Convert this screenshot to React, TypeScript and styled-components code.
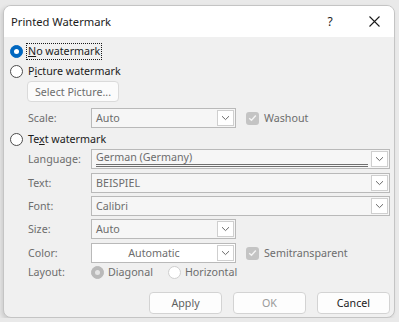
import React from "react";
import styled, { createGlobalStyle } from "styled-components";

const Global = createGlobalStyle`
  html, body { margin: 0; padding: 0; background: #e9e9e9; }
  body { font-family: "Noto Sans", "Open Sans", sans-serif; font-size: 10.7px; color: #1a1a1a; }
  * { box-sizing: border-box; }
`;

const Window = styled.div`
  margin: 5px 0 0 3px;
  width: 392px;
  height: 313px;
  border: 1px solid #c4c4c4;
  border-radius: 8px;
  background: #f0f0f0;
  overflow: hidden;
  box-shadow: -2px 2px 4px rgba(0, 0, 0, 0.12);
  display: flex;
  flex-direction: column;
`;

const TitleBar = styled.div`
  height: 31px;
  background: #ffffff;
  display: flex;
  align-items: center;
  padding-left: 7px;
  flex-shrink: 0;
`;

const Title = styled.div`
  flex: 1;
  font-size: 11.2px;
  color: #1b1b1b;
`;

const TitleButton = styled.div<{ $w: number }>`
  width: ${(p) => p.$w}px;
  height: 31px;
  display: flex;
  align-items: center;
  justify-content: center;
  font-size: 12px;
  color: #1b1b1b;
`;

const Body = styled.div`
  padding: 5px 4px 0 6px;
  display: flex;
  flex-direction: column;
  align-items: stretch;
`;

const RadioRow = styled.div<{ $mt?: number }>`
  height: 18px;
  margin-top: ${(p) => p.$mt ?? 0}px;
  display: flex;
  align-items: center;
  gap: 4px;
`;

const RadioCircle = styled.span<{ $state: "on" | "off" | "dis" | "disoff" }>`
  width: 13px;
  height: 13px;
  border-radius: 50%;
  flex-shrink: 0;
  position: relative;
  background: ${(p) =>
    p.$state === "on" ? "#0067c0" : p.$state === "dis" ? "#b9b9b9" : "#ffffff"};
  border: 1px solid
    ${(p) =>
      p.$state === "on" ? "#0067c0" : p.$state === "dis" ? "#b9b9b9" : p.$state === "disoff" ? "#cfcfcf" : "#4c4c4c"};
  &::after {
    content: "";
    display: ${(p) => (p.$state === "on" || p.$state === "dis" ? "block" : "none")};
    position: absolute;
    left: 50%;
    top: 50%;
    width: 5px;
    height: 5px;
    margin: -2.5px 0 0 -2.5px;
    border-radius: 50%;
    background: ${(p) => (p.$state === "dis" ? "#e4e4e4" : "#ffffff")};
  }
`;

const RadioText = styled.span<{ $focus?: boolean }>`
  color: #1a1a1a;
  padding: 0 1px;
  line-height: 15px;
  outline: ${(p) => (p.$focus ? "1px dotted #1a1a1a" : "none")};
`;

const U = styled.span`
  text-decoration: underline;
`;

const SelectButton = styled.div`
  margin: 1px 0 0 17px;
  width: 92px;
  height: 21px;
  background: #fbfbfb;
  border: 1px solid #dadada;
  border-radius: 4px;
  color: #6d6d6d;
  display: flex;
  align-items: center;
  justify-content: center;
`;

const FormRow = styled.div<{ $mt?: number; $h?: number }>`
  margin-top: ${(p) => p.$mt ?? 0}px;
  height: ${(p) => p.$h ?? 20}px;
  display: grid;
  grid-template-columns: 81px auto auto 1fr;
  align-items: center;
`;

const WideRow = styled(FormRow)`
  grid-template-columns: 81px 1fr;
`;

const Label = styled.div`
  padding-left: 18px;
  color: #6d6d6d;
`;

const Combo = styled.div<{ $w?: number; $white?: boolean }>`
  width: ${(p) => (p.$w ? `${p.$w}px` : "auto")};
  height: 20px;
  border: 1px solid #b9b9b9;
  background: ${(p) => (p.$white ? "#ffffff" : "#f6f6f6")};
  display: flex;
  align-items: stretch;
`;

const ComboText = styled.div<{ $center?: boolean }>`
  flex: 1;
  display: flex;
  align-items: center;
  justify-content: ${(p) => (p.$center ? "center" : "flex-start")};
  padding-left: ${(p) => (p.$center ? 0 : 4)}px;
  color: #6d6d6d;
  white-space: nowrap;
  overflow: hidden;
`;

const DoubleLine = styled.div`
  flex: 1;
  display: flex;
  flex-direction: column;
  padding-left: 4px;
  padding-right: 2px;
`;

const DoubleText = styled.div`
  color: #6d6d6d;
  line-height: 13px;
  border-bottom: 3px double #6f6f6f;
  margin-top: 1px;
`;

const DropButton = styled.div`
  width: 17px;
  margin: 1px;
  background: #ffffff;
  border: 1px solid #cfcfcf;
  display: flex;
  align-items: center;
  justify-content: center;
`;

const CheckWrap = styled.div`
  display: flex;
  align-items: center;
  gap: 5px;
  margin-left: 10px;
  color: #6d6d6d;
`;

const CheckBox = styled.span`
  width: 13px;
  height: 13px;
  border-radius: 3px;
  background: #c4c4c4;
  display: flex;
  align-items: center;
  justify-content: center;
`;

const LayoutOptions = styled.div`
  display: flex;
  align-items: center;
  gap: 4px;
  color: #6d6d6d;
`;

const Spacer = styled.span`
  width: 7px;
`;

const ButtonBar = styled.div`
  margin-top: 12px;
  display: flex;
  justify-content: flex-end;
  gap: 11px;
`;

const DialogButton = styled.div<{ $color: string }>`
  width: 73px;
  height: 22px;
  background: #fdfdfd;
  border: 1px solid #d3d3d3;
  border-radius: 4px;
  display: flex;
  align-items: center;
  justify-content: center;
  color: ${(p) => p.$color};
`;

const Chevron = () => (
  <svg width="9" height="6" viewBox="0 0 9 6">
    <path d="M1 1.2 L4.5 4.6 L8 1.2" fill="none" stroke="#6a6a6a" strokeWidth="1" />
  </svg>
);

const Check = () => (
  <svg width="9" height="8" viewBox="0 0 9 8">
    <path d="M1.2 4.2 L3.5 6.3 L7.8 1.5" fill="none" stroke="#f4f4f4" strokeWidth="1.4" />
  </svg>
);

const CloseIcon = () => (
  <svg width="11" height="11" viewBox="0 0 11 11">
    <path d="M0.5 0.5 L10.5 10.5 M10.5 0.5 L0.5 10.5" stroke="#1b1b1b" strokeWidth="1.1" />
  </svg>
);

const Drop = () => (
  <DropButton>
    <Chevron />
  </DropButton>
);

export default function App() {
  return (
    <>
      <Global />
      <Window>
        <TitleBar>
          <Title>Printed Watermark</Title>
          <TitleButton $w={48}>?</TitleButton>
          <TitleButton $w={40}>
            <CloseIcon />
          </TitleButton>
        </TitleBar>
        <Body>
          <RadioRow>
            <RadioCircle $state="on" />
            <RadioText $focus>
              <U>N</U>o watermark
            </RadioText>
          </RadioRow>
          <RadioRow $mt={2}>
            <RadioCircle $state="off" />
            <RadioText>
              P<U>i</U>cture watermark
            </RadioText>
          </RadioRow>
          <SelectButton>Select Picture...</SelectButton>
          <FormRow $mt={6}>
            <Label>Scale:</Label>
            <Combo $w={145}>
              <ComboText>Auto</ComboText>
              <Drop />
            </Combo>
            <CheckWrap>
              <CheckBox>
                <Check />
              </CheckBox>
              Washout
            </CheckWrap>
          </FormRow>
          <RadioRow $mt={2}>
            <RadioCircle $state="off" />
            <RadioText>
              Te<U>x</U>t watermark
            </RadioText>
          </RadioRow>
          <WideRow $mt={1}>
            <Label>Language:</Label>
            <Combo>
              <DoubleLine>
                <DoubleText>German (Germany)</DoubleText>
              </DoubleLine>
              <Drop />
            </Combo>
          </WideRow>
          <WideRow $mt={4}>
            <Label>Text:</Label>
            <Combo>
              <ComboText>BEISPIEL</ComboText>
              <Drop />
            </Combo>
          </WideRow>
          <WideRow $mt={3}>
            <Label>Font:</Label>
            <Combo>
              <ComboText>Calibri</ComboText>
              <Drop />
            </Combo>
          </WideRow>
          <FormRow $mt={3}>
            <Label>Size:</Label>
            <Combo $w={145}>
              <ComboText>Auto</ComboText>
              <Drop />
            </Combo>
          </FormRow>
          <FormRow $mt={4}>
            <Label>Color:</Label>
            <Combo $w={145} $white>
              <ComboText $center>Automatic</ComboText>
              <Drop />
            </Combo>
            <CheckWrap>
              <CheckBox>
                <Check />
              </CheckBox>
              Semitransparent
            </CheckWrap>
          </FormRow>
          <FormRow $mt={1} $h={16}>
            <Label>Layout:</Label>
            <LayoutOptions>
              <RadioCircle $state="dis" />
              Diagonal
              <Spacer />
              <RadioCircle $state="disoff" />
              Horizontal
            </LayoutOptions>
          </FormRow>
          <ButtonBar>
            <DialogButton $color="#5f5f5f">Apply</DialogButton>
            <DialogButton $color="#9a9a9a">OK</DialogButton>
            <DialogButton $color="#1a1a1a">Cancel</DialogButton>
          </ButtonBar>
        </Body>
      </Window>
    </>
  );
}
